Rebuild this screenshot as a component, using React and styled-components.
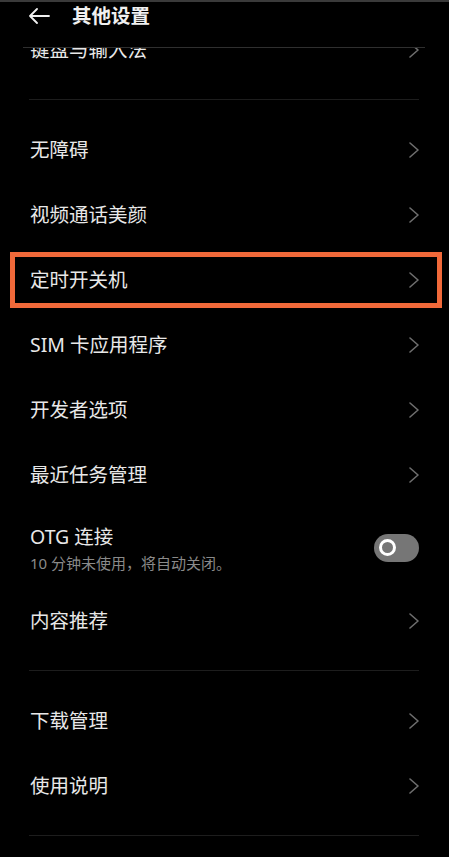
import styled, { createGlobalStyle } from "styled-components";

const GlobalStyle = createGlobalStyle`
  html, body {
    margin: 0;
    padding: 0;
    background: #000;
  }
  body {
    font-family: "Noto Sans", "Noto Sans CJK SC", sans-serif;
  }
`;

const Screen = styled.div`
  width: 449px;
  height: 857px;
  background: #000;
  overflow: hidden;
  display: flex;
  flex-direction: column;
`;

const TopStrip = styled.div`
  height: 2px;
  background: #3a3a3a;
  flex-shrink: 0;
`;

const HeaderBar = styled.div`
  height: 28px;
  display: flex;
  align-items: center;
  gap: 22px;
  padding-left: 28px;
  margin-bottom: 17px;
  flex-shrink: 0;
`;

const HeaderTitle = styled.h1`
  margin: 0;
  font-size: 19.5px;
  font-weight: 600;
  color: #f0f0f0;
  line-height: 1;
`;

const HeaderLine = styled.div`
  height: 1px;
  margin: 0 24px 0 23px;
  background: #2f2f2f;
  flex-shrink: 0;
`;

const List = styled.div`
  flex: 1;
  overflow: hidden;
  display: flex;
  flex-direction: column;
`;

const Row = styled.div`
  position: relative;
  flex-shrink: 0;
  height: ${(p) => (p.$tall ? "81px" : "65px")};
  margin-top: ${(p) => (p.$clipped ? "-31px" : "0")};
  padding: 0 30px;
  display: flex;
  align-items: center;
  justify-content: space-between;

  ${(p) =>
    p.$highlighted &&
    `
    &::after {
      content: "";
      position: absolute;
      top: 5px;
      bottom: 4px;
      left: 10px;
      right: 7px;
      border: 5px solid #f0693a;
    }
  `}
`;

const Label = styled.span`
  font-size: 19.5px;
  color: #e8e8e8;
  line-height: 1.3;
`;

const TextBlock = styled.div`
  display: flex;
  flex-direction: column;
  gap: 5px;
  margin-top: 3px;
`;

const SubLabel = styled.span`
  font-size: 15px;
  color: #8a8a8a;
  line-height: 1.3;
`;

const Separator = styled.div`
  height: 35px;
  flex-shrink: 0;
  display: flex;
  align-items: center;
  padding: 0 30px 0 29px;

  &::before {
    content: "";
    flex: 1;
    height: 1px;
    background: #1d1d1d;
  }
`;

const Toggle = styled.div`
  width: 45px;
  height: 28px;
  border-radius: 14px;
  background: #767676;
  display: flex;
  align-items: center;
  padding-left: 5px;
  box-sizing: border-box;
`;

const Knob = styled.div`
  width: 17px;
  height: 17px;
  border-radius: 50%;
  border: 3.5px solid #fff;
  box-sizing: border-box;
`;

const BackArrow = () => (
  <svg width="22" height="16" viewBox="0 0 22 16" fill="none">
    <path
      d="M21 8H2M9 1L2 8l7 7"
      stroke="#f0f0f0"
      strokeWidth="1.8"
      strokeLinecap="round"
      strokeLinejoin="round"
    />
  </svg>
);

const Chevron = () => (
  <svg width="10" height="16" viewBox="0 0 10 16" fill="none">
    <path
      d="M1 1l8 7-8 7"
      stroke="#6e6e6e"
      strokeWidth="1.6"
      strokeLinecap="round"
      strokeLinejoin="round"
    />
  </svg>
);

const NavRow = ({ label, ...rest }) => (
  <Row {...rest}>
    <Label>{label}</Label>
    <Chevron />
  </Row>
);

export default function App() {
  return (
    <>
      <GlobalStyle />
      <Screen>
        <TopStrip />
        <HeaderBar>
          <BackArrow />
          <HeaderTitle>其他设置</HeaderTitle>
        </HeaderBar>
        <HeaderLine />
        <List>
          <NavRow $clipped label="键盘与输入法" />
          <Separator />
          <NavRow label="无障碍" />
          <NavRow label="视频通话美颜" />
          <NavRow $highlighted label="定时开关机" />
          <NavRow label="SIM 卡应用程序" />
          <NavRow label="开发者选项" />
          <NavRow label="最近任务管理" />
          <Row $tall>
            <TextBlock>
              <Label>OTG 连接</Label>
              <SubLabel>10 分钟未使用，将自动关闭。</SubLabel>
            </TextBlock>
            <Toggle>
              <Knob />
            </Toggle>
          </Row>
          <NavRow label="内容推荐" />
          <Separator />
          <NavRow label="下载管理" />
          <NavRow label="使用说明" />
          <Separator />
        </List>
      </Screen>
    </>
  );
}
